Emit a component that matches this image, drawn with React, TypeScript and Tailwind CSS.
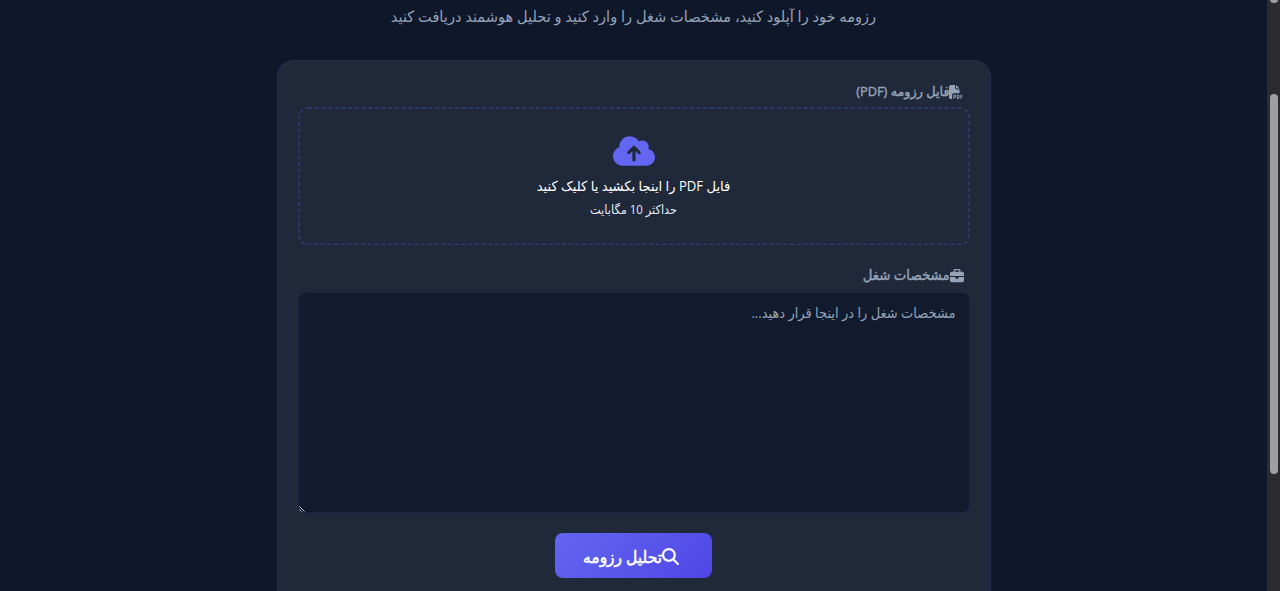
import { FaBriefcase, FaCloudArrowUp, FaFilePdf, FaMagnifyingGlass } from "react-icons/fa6";

const FONT = "font-['Open_Sans','Noto_Sans','DejaVu_Sans',sans-serif]";

export default function App() {
  return (
    <div dir="rtl" className={`relative flex h-[591px] overflow-hidden bg-[#0f172a] ${FONT}`}>
      <Scrollbar />
      <main className="flex flex-1 flex-col items-center">
        <p className="mt-[4px] h-[24px] scale-y-105 whitespace-nowrap text-[14.6px] leading-[24px] text-[#94a3b8]">
          رزومه خود را آپلود کنید، مشخصات شغل را وارد کنید و تحلیل هوشمند دریافت کنید
        </p>

        <section className="mt-8 h-[560px] w-[714px] shrink-0 rounded-2xl border border-[#232e50] bg-[#1f293a] px-5 pt-5">
          {/* resume file */}
          <div className="flex h-[22px] items-center pr-[7px] text-[12.8px] text-[#94a3b8] [-webkit-text-stroke:0.4px_#94a3b8]">
            <FaFilePdf size={14} className="-ml-px shrink-0" />
            <span className="scale-y-105 whitespace-nowrap">فایل رزومه (PDF)</span>
          </div>
          <div className="relative mt-[4px] flex h-[138px] flex-col items-center pt-[25px] text-white">
            <svg className="absolute inset-0 h-full w-full" fill="none" aria-hidden>
              <rect x="1" y="1" width="670" height="136.5" rx="9" stroke="#343c7a" strokeWidth="1.5" strokeDasharray="4 2.7" />
            </svg>
            <FaCloudArrowUp size={42} className="-mt-[2px] h-[42px] text-[#6366f1]" />
            <p className="mt-[2px] h-[24px] scale-y-105 whitespace-nowrap text-[13.1px] leading-[24px]">فایل PDF را اینجا بکشید یا کلیک کنید</p>
            <p className="h-[24px] scale-y-110 whitespace-nowrap text-[11.4px] leading-[24px] text-[#e2e8f0]">حداکثر 10 مگابایت</p>
          </div>

          {/* job description */}
          <div className="mt-[20px] flex h-[22px] items-center pr-[6px] text-[13.3px] text-[#94a3b8] [-webkit-text-stroke:0.4px_#94a3b8]">
            <FaBriefcase size={14} className="shrink-0" />
            <span className="scale-y-105 whitespace-nowrap">مشخصات شغل</span>
          </div>
          <div className="relative mt-[5px] h-[221px] rounded-lg border border-[#1c2548] bg-[#121a2d] px-[13px] pt-[8px] text-[13px] leading-[24px] text-[#94a3b8]">
            <span className="block scale-y-110 whitespace-nowrap">مشخصات شغل را در اینجا قرار دهید...</span>
            <Grip />
          </div>

          <button className="mx-auto mt-5 flex h-[45px] w-[157px] items-center justify-center rounded-lg bg-linear-135 from-[#6366f1] to-[#4f46e5] pr-[5px] pt-[2px] text-[15.5px] text-white [-webkit-text-stroke:0.5px_white]">
            <FaMagnifyingGlass size={17} className="shrink-0" />
            <span className="scale-y-110 whitespace-nowrap">تحلیل رزومه</span>
          </button>
        </section>
      </main>
    </div>
  );
}

function Grip() {
  return (
    <svg className="absolute bottom-0 left-0" width="6" height="6" viewBox="0 0 6 6" stroke="#c8c8c8" aria-hidden>
      <path d="M0.5 0.5L5.5 5.5M0.5 3.5L2.5 5.5" />
    </svg>
  );
}

function Scrollbar() {
  return (
    <div className="relative w-[13px] shrink-0 bg-[#2c2c2c]">
      <div className="absolute left-[3px] top-[-4px] h-[7px] w-[8px] rounded-sm bg-[#9f9f9f]" />
      <div className="absolute left-[3px] top-[94px] h-[380px] w-[8px] rounded-full bg-[#9f9f9f]" />
    </div>
  );
}
